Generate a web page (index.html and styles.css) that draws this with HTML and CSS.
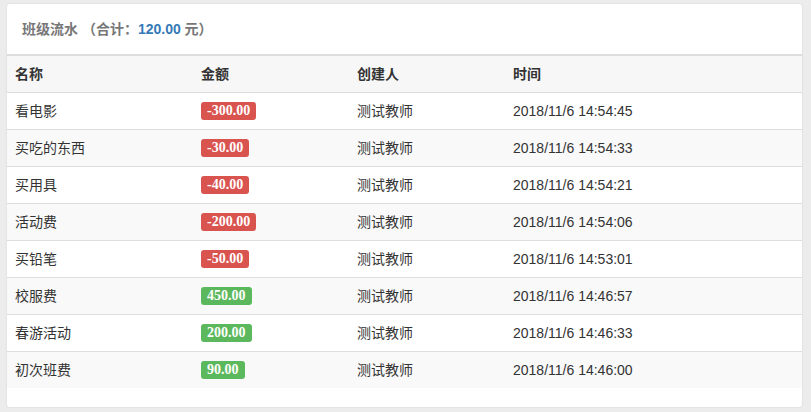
FILE: index.html
```html
<!DOCTYPE html>
<html lang="zh-CN">
<head>
    <meta charset="UTF-8">
    <meta name="viewport" content="width=device-width, initial-scale=1.0">
    <title>班级流水</title>
    <link rel="stylesheet" href="styles.css">
</head>
<body>
    <div class="panel">
        <div class="panel-heading">
            班级流水 （合计：<span class="total">120.00</span> 元）
        </div>
        <table class="flow">
            <thead>
                <tr>
                    <th class="c-name">名称</th>
                    <th class="c-money">金额</th>
                    <th class="c-user">创建人</th>
                    <th>时间</th>
                </tr>
            </thead>
            <tbody>
                <tr>
                    <td>看电影</td>
                    <td><span class="label out">-300.00</span></td>
                    <td>测试教师</td>
                    <td>2018/11/6 14:54:45</td>
                </tr>
                <tr>
                    <td>买吃的东西</td>
                    <td><span class="label out">-30.00</span></td>
                    <td>测试教师</td>
                    <td>2018/11/6 14:54:33</td>
                </tr>
                <tr>
                    <td>买用具</td>
                    <td><span class="label out">-40.00</span></td>
                    <td>测试教师</td>
                    <td>2018/11/6 14:54:21</td>
                </tr>
                <tr>
                    <td>活动费</td>
                    <td><span class="label out">-200.00</span></td>
                    <td>测试教师</td>
                    <td>2018/11/6 14:54:06</td>
                </tr>
                <tr>
                    <td>买铅笔</td>
                    <td><span class="label out">-50.00</span></td>
                    <td>测试教师</td>
                    <td>2018/11/6 14:53:01</td>
                </tr>
                <tr>
                    <td>校服费</td>
                    <td><span class="label in">450.00</span></td>
                    <td>测试教师</td>
                    <td>2018/11/6 14:46:57</td>
                </tr>
                <tr>
                    <td>春游活动</td>
                    <td><span class="label in">200.00</span></td>
                    <td>测试教师</td>
                    <td>2018/11/6 14:46:33</td>
                </tr>
                <tr>
                    <td>初次班费</td>
                    <td><span class="label in">90.00</span></td>
                    <td>测试教师</td>
                    <td>2018/11/6 14:46:00</td>
                </tr>
            </tbody>
        </table>
    </div>
</body>
</html>
```
FILE: styles.css
```css
body {
    margin: 0;
    padding: 4px 9px 5px 7px;
    background-color: #ececec;
    font-family: "Liberation Sans", "Noto Sans CJK SC", sans-serif;
    font-size: 14px;
    line-height: 20px;
    color: #333;
}

.panel {
    background-color: #fff;
    border-radius: 3px;
    box-shadow: 0 0 2px rgba(0, 0, 0, 0.12);
    padding-bottom: 19px;
}

.panel-heading {
    padding: 15px;
    font-weight: bold;
    color: #777;
    border-bottom: 2px solid #ddd;
}

.total {
    color: #337ab7;
}

.flow {
    width: 100%;
    border-collapse: collapse;
}

.flow th,
.flow td {
    text-align: left;
    padding: 8px;
    border-top: 1px solid #ddd;
}

.flow thead th {
    border-top: 0;
    background-color: #f7f7f7;
}

.flow tbody tr:nth-child(even) td {
    background-color: #f9f9f9;
}

.c-name {
    width: 170px;
}

.c-money,
.c-user {
    width: 140px;
}

.label {
    display: inline-block;
    padding: 2px 6px 2px;
    border-radius: 3px;
    color: #fff;
    font-family: "Liberation Serif", serif;
    font-weight: bold;
    font-size: 14px;
    line-height: 14px;
    vertical-align: 1px;
}

.out {
    background-color: #d9534f;
}

.in {
    background-color: #5cb85c;
}
```
